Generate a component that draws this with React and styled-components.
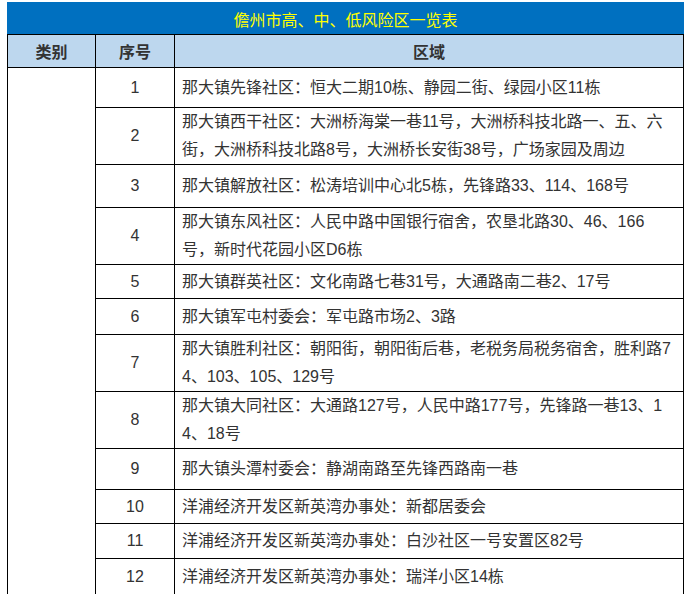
import React from 'react';
import styled, { createGlobalStyle } from 'styled-components';

const GlobalStyle = createGlobalStyle`
    html, body {
        margin: 0;
        padding: 0;
        overflow: hidden;
        background: #fff;
    }
    body {
        font-family: "Liberation Sans", "Noto Sans CJK SC", sans-serif;
    }
`;

const Page = styled.div`
    padding: 2px 0 0 7px;
`;

const Table = styled.table`
    width: 676px;
    border-collapse: collapse;
    table-layout: fixed;
    font-size: 16px;
    color: #333;
`;

const TitleCell = styled.td`
    height: 31px;
    padding: 0;
    background: #0070c0;
    color: #ffff00;
    text-align: center;
    border: 1px solid #0070c0;
    border-bottom: 1px solid #000;
`;

const HeadCell = styled.th`
    height: 32px;
    padding: 0;
    background: #bdd7ee;
    font-weight: bold;
    color: #333;
    text-align: center;
    border: 1px solid #000;
`;

const Row = styled.tr`
    height: ${(p) => (p.$h ? `${p.$h}px` : 'auto')};
`;

const Cell = styled.td`
    padding: 0 7px;
    line-height: 28px;
    border: 1px solid #000;
    text-align: ${(p) => (p.$center ? 'center' : 'left')};
    word-break: break-all;
    vertical-align: middle;
`;

const rows = [
    { n: 1, h: 40, text: '那大镇先锋社区：恒大二期10栋、静园二街、绿园小区11栋' },
    { n: 2, text: '那大镇西干社区：大洲桥海棠一巷11号，大洲桥科技北路一、五、六街，大洲桥科技北路8号，大洲桥长安街38号，广场家园及周边' },
    { n: 3, h: 43, text: '那大镇解放社区：松涛培训中心北5栋，先锋路33、114、168号' },
    { n: 4, text: '那大镇东风社区：人民中路中国银行宿舍，农垦北路30、46、166号，新时代花园小区D6栋' },
    { n: 5, h: 34, text: '那大镇群英社区：文化南路七巷31号，大通路南二巷2、17号' },
    { n: 6, h: 36, text: '那大镇军屯村委会：军屯路市场2、3路' },
    { n: 7, text: '那大镇胜利社区：朝阳街，朝阳街后巷，老税务局税务宿舍，胜利路74、103、105、129号' },
    { n: 8, text: '那大镇大同社区：大通路127号，人民中路177号，先锋路一巷13、14、18号' },
    { n: 9, h: 41, text: '那大镇头潭村委会：静湖南路至先锋西路南一巷' },
    { n: 10, h: 34, text: '洋浦经济开发区新英湾办事处：新都居委会' },
    { n: 11, h: 35, text: '洋浦经济开发区新英湾办事处：白沙社区一号安置区82号' },
    { n: 12, h: 36, text: '洋浦经济开发区新英湾办事处：瑞洋小区14栋' },
];

const App = () => {
    return (
        <>
            <GlobalStyle />
            <Page>
                <Table>
                    <colgroup>
                        <col style={{ width: 88 }} />
                        <col style={{ width: 79 }} />
                        <col style={{ width: 509 }} />
                    </colgroup>
                    <tbody>
                        <tr>
                            <TitleCell colSpan={3}>儋州市高、中、低风险区一览表</TitleCell>
                        </tr>
                        <tr>
                            <HeadCell>类别</HeadCell>
                            <HeadCell>序号</HeadCell>
                            <HeadCell>区域</HeadCell>
                        </tr>
                        {rows.map((r, i) => (
                            <Row key={r.n} $h={r.h}>
                                {i === 0 ? <Cell rowSpan={rows.length} /> : null}
                                <Cell $center>{r.n}</Cell>
                                <Cell>{r.text}</Cell>
                            </Row>
                        ))}
                    </tbody>
                </Table>
            </Page>
        </>
    );
};

export default App;
